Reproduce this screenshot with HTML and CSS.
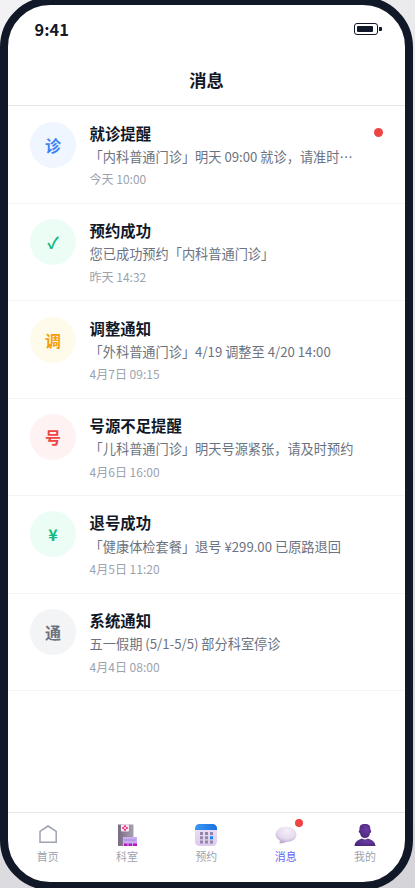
FILE: index.html
```html
<!DOCTYPE html>
<html lang="zh-CN">
<head>
<meta charset="UTF-8">
<title>消息</title>
<link rel="stylesheet" href="styles.css">
</head>
<body>
<div class="phone">
  <div class="status"><span class="clock">9:41</span><span class="battery"><span class="cell"><i></i></span><b></b></span></div>
  <header class="header">消息</header>
  <main class="list">
    <article class="item"><div class="avatar blue">诊</div><div class="body"><h3>就诊提醒</h3><p>「内科普通门诊」明天 09:00 就诊，请准时⋯</p><time>今天 10:00</time></div><span class="dot"></span></article>
    <article class="item"><div class="avatar green">✓</div><div class="body"><h3>预约成功</h3><p>您已成功预约「内科普通门诊」</p><time>昨天 14:32</time></div></article>
    <article class="item"><div class="avatar amber">调</div><div class="body"><h3>调整通知</h3><p>「外科普通门诊」4/19 调整至 4/20 14:00</p><time>4月7日 09:15</time></div></article>
    <article class="item"><div class="avatar red">号</div><div class="body"><h3>号源不足提醒</h3><p>「儿科普通门诊」明天号源紧张，请及时预约</p><time>4月6日 16:00</time></div></article>
    <article class="item"><div class="avatar green">¥</div><div class="body"><h3>退号成功</h3><p>「健康体检套餐」退号 ¥299.00 已原路退回</p><time>4月5日 11:20</time></div></article>
    <article class="item"><div class="avatar gray">通</div><div class="body"><h3>系统通知</h3><p>五一假期 (5/1-5/5) 部分科室停诊</p><time>4月4日 08:00</time></div></article>
  </main>
  <nav class="tabs">
    <a class="tab">
      <svg viewBox="0 0 24 24"><path d="M4 20.300V9.300L12 4L20.200 9.300V20.300Z" fill="none" stroke="#9ca3af" stroke-width="1.500"/></svg>首页</a>
    <a class="tab">
      <svg viewBox="0 0 24 24">
        <defs><linearGradient id="bld"><stop offset="0" stop-color="#786b82"/><stop offset="1" stop-color="#a9a0b1"/></linearGradient></defs>
        <path d="M3 2.500h15.500V24H3z" fill="url(#bld)"/>
        <rect x="6" y="2.500" width="8" height="7" rx="1" fill="#f4e9f5"/>
        <path d="M10 3.200v5.600M7.200 6h5.600" stroke="#f03a80" stroke-width="2.200"/><circle cx="10" cy="6" r=".9" fill="#fff"/>
        <path d="M8 15h14v9H8z" fill="#c9aef0"/><path d="M9 17.500h12v1H9z" fill="#a783dc"/>
        <path d="M9 21.500h3.500V24H9zM13.500 21.500h3.500V24h-3.500zM18 21.500h4V24h-4z" fill="#b718b5"/>
      </svg>科室</a>
    <a class="tab">
      <svg viewBox="0 0 24 24">
        <defs><linearGradient id="cal" x2="0" y2="1"><stop offset="0" stop-color="#eee5f6"/><stop offset="1" stop-color="#dcc9ef"/></linearGradient><linearGradient id="top"><stop offset="0" stop-color="#3b98f8"/><stop offset="1" stop-color="#1770df"/></linearGradient></defs>
        <rect x="1" y="2" width="22" height="22" rx="4.500" fill="url(#cal)"/><path d="M1 8V6.500A4.500 4.500 0 0 1 5.500 2h13A4.500 4.500 0 0 1 23 6.500V8z" fill="url(#top)"/>
        <path d="M6 10h3v3H6zm5 0h3v3h-3zm5 0h3v3h-3zM6 14.200h3v3H6zm5 0h3v3h-3zM6 18.400h3v3H6zm5 0h3v3h-3zm5 0h3v3h-3z" fill="#9585a7"/><path d="M16 14.200h3v3h-3z" fill="#1681ed"/>
      </svg>预约</a>
    <a class="tab active">
      <svg viewBox="0 0 24 24">
        <defs><radialGradient id="bub" cx=".55" cy=".25" r=".75"><stop offset="0" stop-color="#f5f0f9"/><stop offset=".65" stop-color="#e3d8ed"/><stop offset="1" stop-color="#b9a4cb"/></radialGradient></defs>
        <path d="M12 4.700C18 4.700 22.500 8.100 22.500 12.500S18 20 12 20C10.700 20.700 8 21.500 5.500 21.300L5.800 18.400C3.200 17 1.500 15 1.500 12.500C1.500 8.100 6 4.700 12 4.700Z" fill="url(#bub)"/>
      </svg>消息<span class="badge"></span></a>
    <a class="tab">
      <svg viewBox="0 0 24 24">
        <defs><radialGradient id="usr" cx=".6" cy=".4" r=".7"><stop offset="0" stop-color="#6a3da5"/><stop offset="1" stop-color="#4a2575"/></radialGradient></defs>
        <path d="M6.500 8C6.200 3.500 8 2 12 2S17.500 3.500 17.500 8C18.600 8.500 18.500 10.600 17 11.200C16.500 14.500 14.500 16 12 16S7.500 14.500 7 11.200C5.500 10.600 5.400 8.500 6.500 8Z" fill="url(#usr)"/><path d="M1.500 24C2 19 6 17.500 9 16.500Q12 18.300 15 16.500C18 17.500 22 19 22.500 24Z" fill="url(#usr)"/>
      </svg>我的</a>
  </nav>
</div>
</body>
</html>
```

FILE: styles.css
```css
* { box-sizing: border-box; margin: 0; padding: 0; }
html, body { height: 888px; overflow: hidden; }
body { background: linear-gradient(145deg, #f2f2f4, #d4d4d9); font-family: "Noto Sans CJK SC", sans-serif; color: #111827; }
.phone { width: 413px; height: 893px; margin-top: -3px; border: 8px solid #111827; border-radius: 50px; background: #fff; overflow: hidden; display: flex; flex-direction: column; }
.status { height: 48px; padding: 0 24px 0 26.600px; display: flex; align-items: center; justify-content: space-between; flex: none; }
.clock { font-size: 16.320px; font-weight: 600; line-height: 24px; }
.battery { display: flex; align-items: center; gap: 1px; margin-right: -1px; }
.cell { width: 24px; height: 12px; border: 1px solid #111827; border-radius: 3px; padding: 2px; display: block; }
.cell i { display: block; width: 16px; height: 6px; border-radius: 1px; background: #111827; }
.battery b { width: 3px; height: 4px; border-radius: 0 1px 1px 0; background: #111827; }
.header { height: 53.200px; flex: none; border-bottom: 1px solid #e5e7eb; text-align: center; font-size: 17.300px; line-height: 53px; font-weight: 600; }
.list { flex: 1; }
.item { height: 97.470px; padding: 15.400px 22px; border-bottom: 1px solid #f3f4f6; display: flex; gap: 13.600px; }
.avatar { flex: none; width: 46px; height: 46px; border-radius: 50%; display: flex; align-items: center; justify-content: center; font-size: 16px; font-weight: 600; }
.blue { color: #3b82f6; background: #eff6ff; }
.green { color: #10b981; background: #ecfdf5; }
.amber { color: #f59e0b; background: #fffbeb; }
.red { color: #ef4444; background: #fef2f2; }
.gray { color: #6b7280; background: #f3f4f6; }
.body { flex: 1; min-width: 0; }
h3 { font-size: 15.360px; line-height: 23px; font-weight: 600; }
p { font-size: 13.200px; line-height: 20px; margin-top: 2.120px; color: #6b7280; white-space: nowrap; }
time { display: block; font-size: 12px; line-height: 18px; margin-top: 3.600px; color: #9ca3af; }
.dot { flex: none; width: 9px; height: 9px; margin-top: 6px; border-radius: 50%; background: #ef4444; }
.tabs { height: 70px; flex: none; border-top: 1px solid #e5e7eb; display: flex; padding-right: .4px; }
.tab { flex: 1; padding-top: 9px; display: flex; flex-direction: column; align-items: center; position: relative; font-size: 10.900px; line-height: 16px; color: #9ca3af; }
.tab svg { width: 24px; height: 24px; margin-bottom: 2px; }
.active { color: #6366f1; }
.badge { position: absolute; width: 8px; height: 8px; top: 6px; right: 22.300px; border-radius: 50%; background: #ef4444; }
```
